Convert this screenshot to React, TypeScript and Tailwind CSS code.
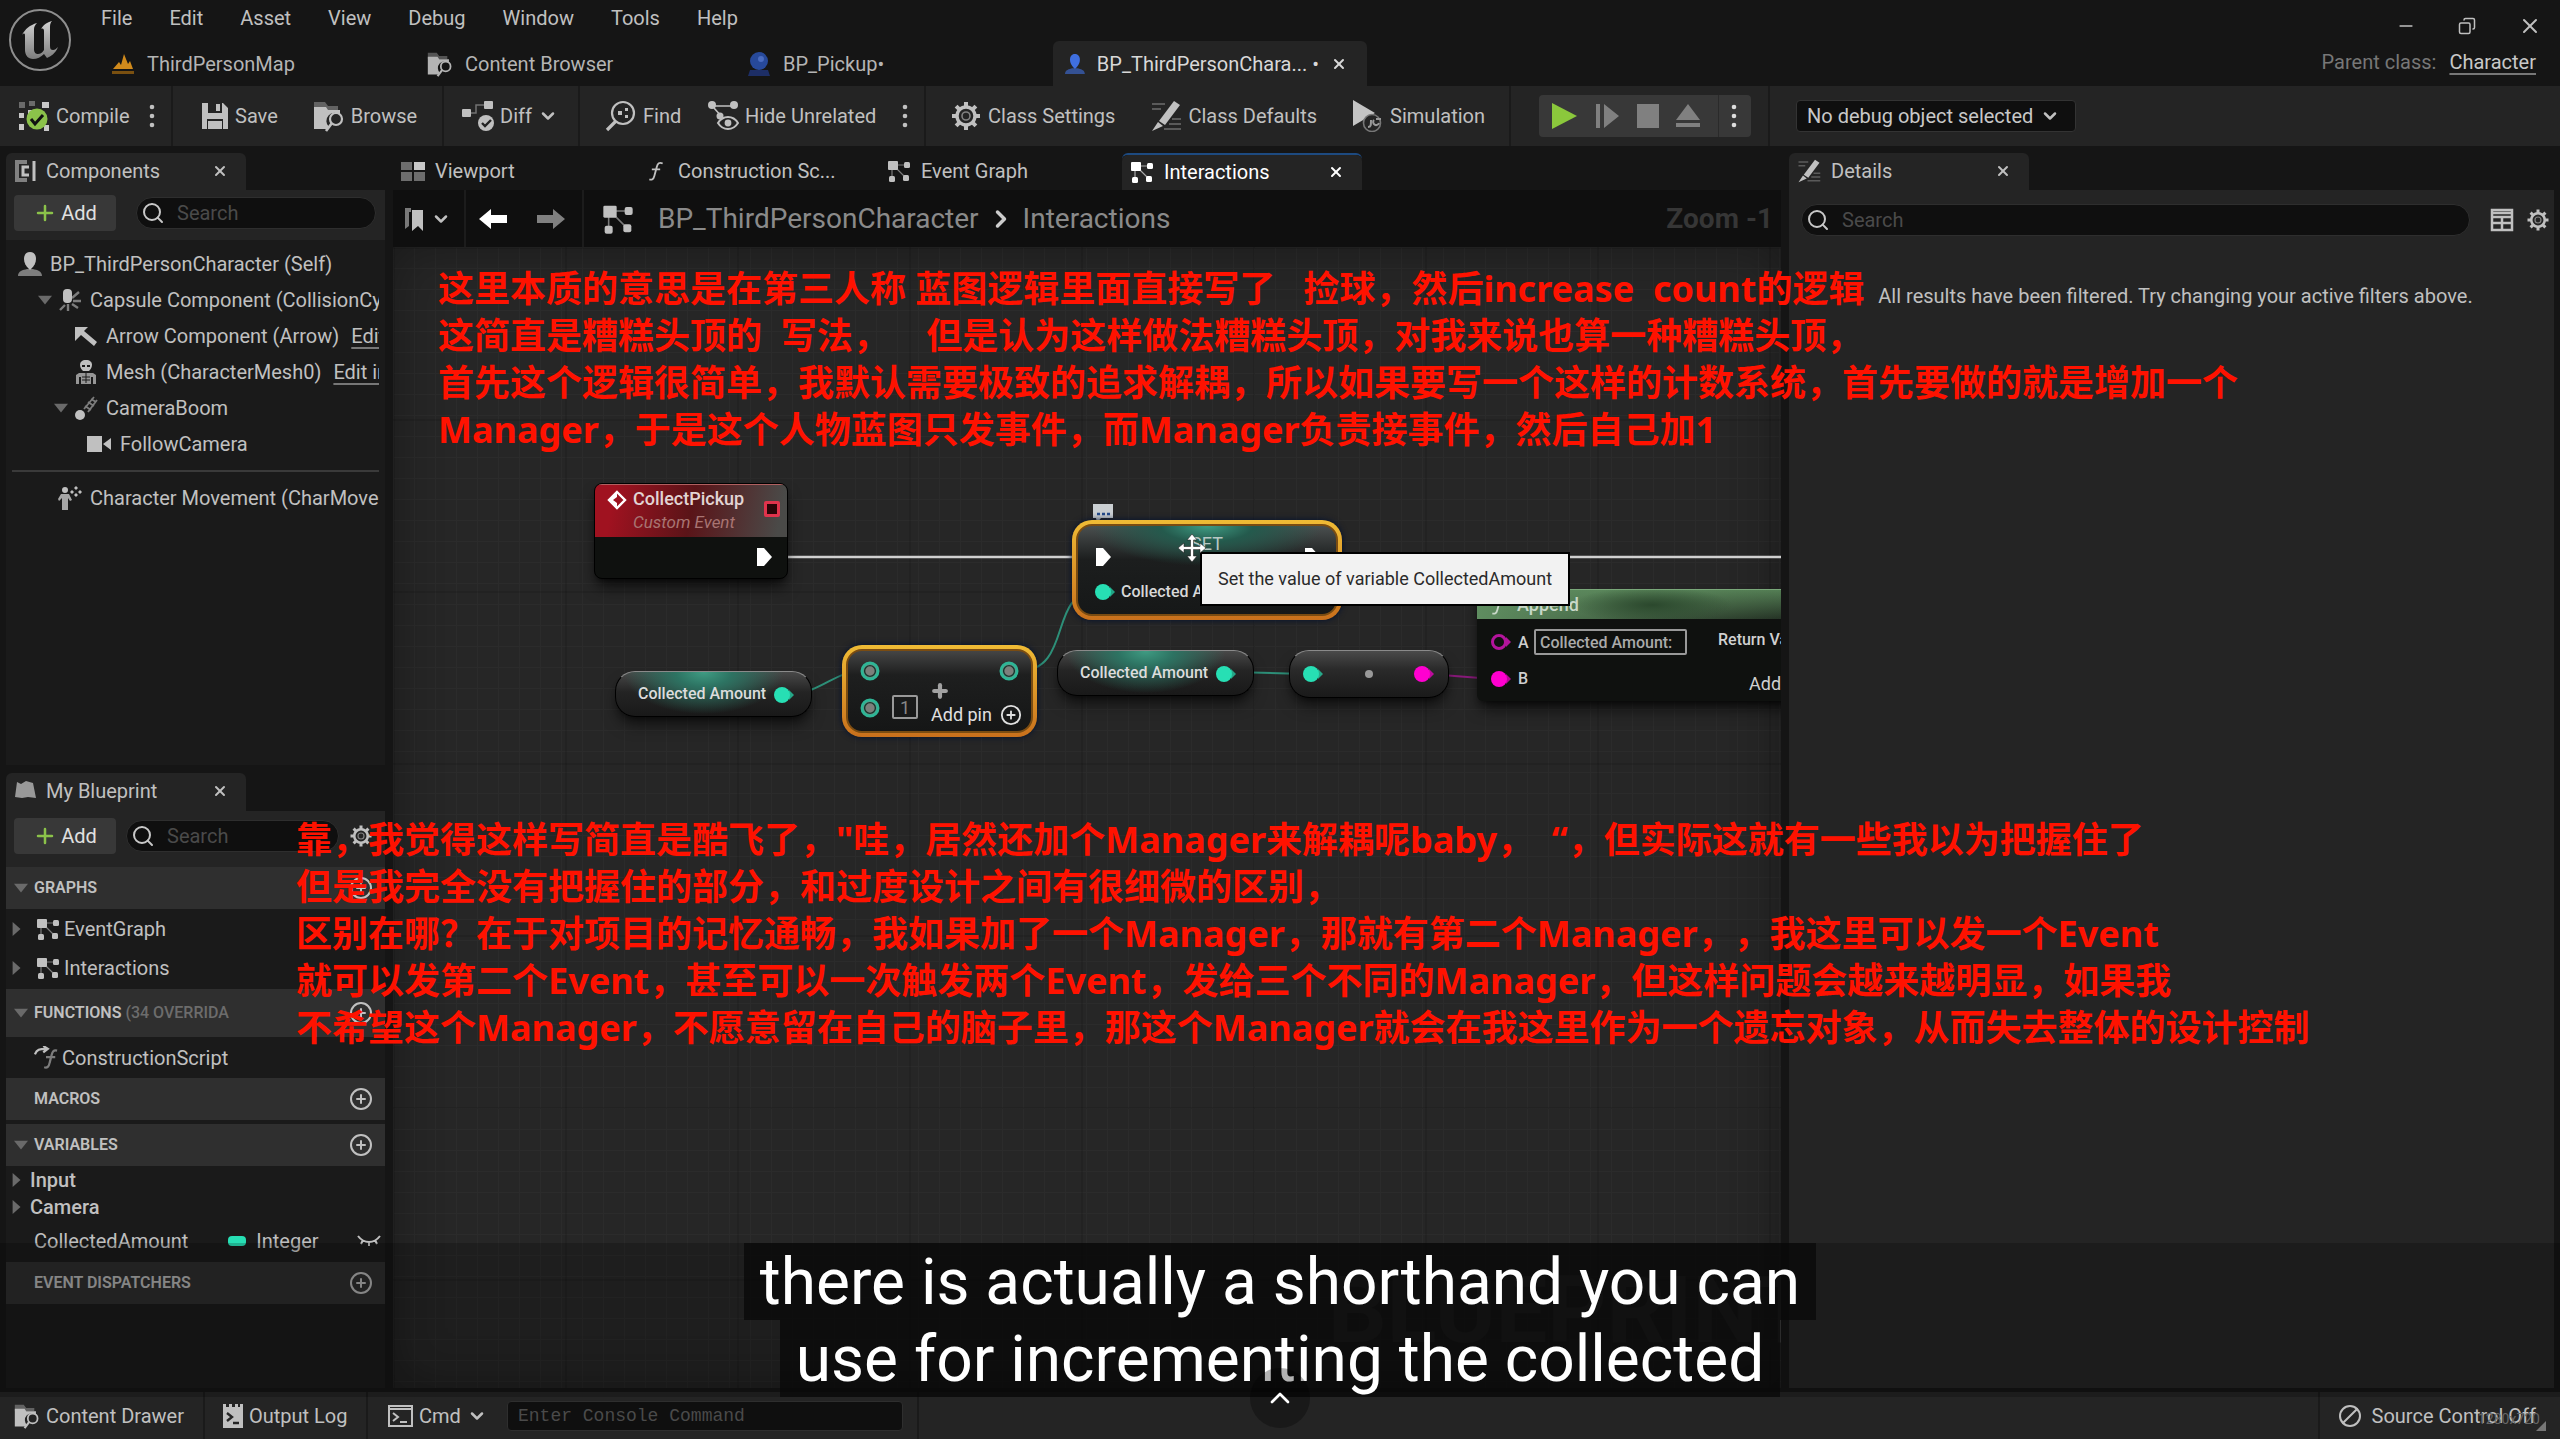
import type { ReactNode } from "react";
import { ChevronDown, ChevronUp, ChevronRight, Search, Plus, Copy, Minus, X, Ban, CirclePlus } from "lucide-react";

/* ---------- icons ---------- */

type IconProps = { className?: string };

const GraphIcon = ({ className = "size-6" }: IconProps) => (
  <svg viewBox="0 0 24 24" className={className} fill="currentColor" stroke="currentColor">
    <path d="M6 6h14M6 6l13 13M5 8v12" fill="none" strokeWidth="1.2" opacity=".6" />
    <rect x="1" y="2" width="10" height="9" rx="1" stroke="none" />
    <rect x="17" y="3" width="6" height="6" rx="1.5" stroke="none" />
    <rect x="2" y="17" width="6" height="6" rx="1.5" stroke="none" />
    <rect x="16" y="16" width="6" height="6" rx="1.5" stroke="none" />
  </svg>
);

const GearIcon = ({ className = "size-6" }: IconProps) => (
  <svg viewBox="0 0 32 32" className={className} fill="none" stroke="currentColor">
    {[0, 45, 90, 135].map((a) => (
      <path key={a} d="M16 2v5M16 25v5" strokeWidth="4" transform={`rotate(${a} 16 16)`} />
    ))}
    <circle cx="16" cy="16" r="9" strokeWidth="3.4" />
    <circle cx="16" cy="16" r="4" strokeWidth="1.6" opacity=".6" />
  </svg>
);

const FolderSearchIcon = ({ className = "size-7" }: IconProps) => (
  <svg viewBox="0 0 32 32" className={className} fill="currentColor">
    <path d="M1 2h11l3 4h10v4H1z" opacity=".4" />
    <path d="M1 7h12l2 3h12v5a8 8 0 0 0-11 12l-1 2H1z" />
    <circle cx="23" cy="19" r="6" fill="none" stroke="currentColor" strokeWidth="2.2" />
    <path d="M19 23l-6 8" stroke="currentColor" strokeWidth="2.6" />
  </svg>
);

const PencilIcon = ({ className = "size-7" }: IconProps) => (
  <svg viewBox="0 0 32 32" className={className} fill="currentColor">
    <path d="M2 4h13M2 9h9M22 19h9M19 24h12M14 29h17" stroke="currentColor" strokeWidth="2" opacity=".35" />
    <path d="M24 1l6 4-15 20-6-4zM8 22l5 4-11 5z" />
  </svg>
);

const PersonIcon = ({ className = "size-6" }: IconProps) => (
  <svg viewBox="0 0 24 24" className={className} fill="currentColor">
    <path d="M0 24c0-5 5-6 9-7h6c4 1 9 2 9 7z" opacity=".6" />
    <path d="M12 0c4 0 6 3 6 7s-2 7-4 9l-2 2-2-2c-2-2-4-5-4-9s2-7 6-7z" />
  </svg>
);

const CompileIcon = () => (
  <svg viewBox="0 0 32 32" className="size-8">
    <path d="M1 2h6v6H1zM11 1h6v5h-6z" fill="#6b6b6b" />
    <path d="M24 2h7v6h-7zM1 13h5v5H1zM1 24h5v6H1zM10 10h6v5h-6zM26 25h5v6h-5z" fill="#c8c8c8" />
    <circle cx="19" cy="19" r="10.5" fill="#8bc24a" />
    <path d="M13 19l4 5 8-9" fill="none" stroke="#111" strokeWidth="3" />
  </svg>
);

const SaveIcon = () => (
  <svg viewBox="0 0 28 28" className="size-7" fill="currentColor">
    <path d="M1 1h21l5 5v21H1zM7 1v10h14V1zM6 17v10h16V17z" fillRule="evenodd" />
    <path d="M15 2h4v7h-4zM7 19h14v8H7z" />
  </svg>
);

const DiffIcon = () => (
  <svg viewBox="0 0 32 32" className="size-8" fill="currentColor">
    <path d="M8 13h6V5h10" fill="none" stroke="currentColor" strokeWidth="1.5" opacity=".5" />
    <rect x="0" y="9" width="9" height="8" rx="1" />
    <rect x="22" y="1" width="9" height="8" rx="1" />
    <circle cx="24" cy="23" r="8" />
    <path d="M20 23l3 3 6-6" fill="none" stroke="#242424" strokeWidth="2.4" />
  </svg>
);

const FindIcon = () => (
  <svg viewBox="0 0 32 32" className="size-8" fill="none" stroke="currentColor">
    <circle cx="18" cy="13" r="11" strokeWidth="2.2" />
    <path d="M11 21L2 30" strokeWidth="3.2" />
    <path d="M13 11h4v4h-4zM20 8h3v3h-3zM20 15h3v3h-3z" fill="currentColor" stroke="none" />
  </svg>
);

const HideIcon = () => (
  <svg viewBox="0 0 32 32" className="size-8" fill="currentColor">
    <path d="M5 6h20M7 8l8 9" stroke="currentColor" strokeWidth="1.6" />
    <circle cx="5" cy="5" r="4" />
    <circle cx="27" cy="5" r="4" />
    <circle cx="13" cy="16" r="3.5" />
    <path d="M11 23c5-8 15-8 20 0-5 8-15 8-20 0z" fill="#242424" stroke="currentColor" strokeWidth="2" />
    <circle cx="21" cy="23" r="3.4" />
  </svg>
);

const SimulateIcon = () => (
  <svg viewBox="0 0 32 32" className="size-8">
    <path d="M1 0l22 13L1 26z" fill="#c4c4c4" />
    <circle cx="20" cy="23" r="8.5" fill="#242424" stroke="#777" strokeWidth="1.6" />
    <path d="M16 27c3 0 3-2 3-7M27 23a3 3 0 1 1-5-3" fill="none" stroke="#999" strokeWidth="2" />
    <path d="M24 19h5" stroke="#999" strokeWidth="2" />
  </svg>
);

const FuncIcon = ({ className = "size-6" }: IconProps) => (
  <svg viewBox="0 0 24 24" className={className} fill="none" stroke="currentColor" strokeWidth="2.2">
    <path d="M20 3c-4-2-6 0-7 4l-3 11c-1 4-3 5-6 4M7 10h10" />
  </svg>
);

const Dots = () => (
  <svg viewBox="0 0 6 24" className="h-6 w-1.5" fill="currentColor">
    <circle cx="3" cy="3" r="2.3" />
    <circle cx="3" cy="12" r="2.3" />
    <circle cx="3" cy="21" r="2.3" />
  </svg>
);

const Caret = ({ open = false }: { open?: boolean }) => (
  <svg viewBox="0 0 16 16" className="size-3.5 shrink-0 text-[#6a6a6a]" fill="currentColor">
    {open ? <path d="M0 3h16L8 13z" /> : <path d="M3 0v16l9-8z" />}
  </svg>
);

const UnrealLogo = () => (
  <svg viewBox="0 0 64 64" className="size-16">
    <defs>
      <linearGradient id="metal" x1="0" y1="0" x2="0" y2="1">
        <stop offset="0" stopColor="#d2d2d2" />
        <stop offset="1" stopColor="#7d7d7d" />
      </linearGradient>
    </defs>
    <circle cx="32" cy="32" r="30" fill="#161616" stroke="#8e8e8e" strokeWidth="2" />
    <path
      d="M14 27c3-6 8-10 15-12-2 2-3 4-3 6v20c0 4 2 5 4 5s4-1 6-4V23c0-2-1-3-3-2 3-5 7-7 11-8-2 2-2 4-2 7v18c0 3 1 4 3 4 2 0 3-1 5-3-3 7-7 9-11 11l-3-4c-3 3-7 5-11 5-5 0-8-4-8-9V28c0-3-1-3-3-1z"
      fill="url(#metal)"
    />
  </svg>
);

/* ---------- shared pieces ---------- */

const ToolButton = ({ icon, children }: { icon: ReactNode; children: ReactNode }) => (
  <button className="flex items-center gap-1.5 whitespace-nowrap">
    {icon}
    {children}
  </button>
);

const ToolGroup = ({ className, children }: { className: string; children: ReactNode }) => (
  <div className={`flex shrink-0 items-center border-r-2 border-[#1a1a1a] ${className}`}>{children}</div>
);

const PanelTab = ({ icon, label, active = false }: { icon: ReactNode; label: string; active?: boolean }) => (
  <div
    className={`flex h-full w-60 shrink-0 items-center gap-2.5 rounded-t-md pr-[18px] pb-0.5 pl-2 ${
      active ? "bg-[#242424]" : ""
    }`}
  >
    {icon}
    <span className="grow whitespace-nowrap">{label}</span>
    {active && (
      <button aria-label={`Close ${label}`}>
        <X className="size-4" strokeWidth={3} />
      </button>
    )}
  </div>
);

const SearchBox = ({ id, className }: { id: string; className: string }) => (
  <label
    htmlFor={id}
    className={`flex h-8 items-center gap-3 rounded-full border border-[#2e2e2e] bg-[#0f0f0f] px-1 ${className}`}
  >
    <Search className="size-6 shrink-0 text-[#c8c8c8]" />
    <input
      id={id}
      type="text"
      placeholder="Search"
      className="w-full min-w-0 bg-transparent text-xl leading-6 outline-none placeholder:text-[#4a4a4a]"
    />
  </label>
);

const AddButton = () => (
  <button className="flex h-9 w-[102px] shrink-0 items-center justify-center gap-1 rounded bg-[#383838] text-[#e0e0e0]">
    <Plus className="size-6 text-[#8bc24a]" strokeWidth={2.5} />
    Add
  </button>
);

/* ---------- components panel ---------- */

const CapsuleIcon = () => (
  <svg viewBox="0 0 24 24" className="size-6 shrink-0" fill="none" stroke="currentColor">
    <path d="M14 10l7-6M15 13h8M14 16l6 4M10 16v7M7 17l-5 5" strokeWidth="2.4" opacity=".6" />
    <rect x="5" y="1" width="9" height="14" rx="4" fill="currentColor" stroke="none" />
  </svg>
);
const ArrowIcon = () => (
  <svg viewBox="0 0 24 24" className="size-6 shrink-0" fill="currentColor">
    <path d="M1 3h13l-4 4 13 11-3 4L7 11l-6 6z" />
  </svg>
);
const SkeletonIcon = () => (
  <svg viewBox="0 0 24 24" className="size-6 shrink-0" fill="currentColor">
    <path d="M12 0c4 0 6 2 6 5s-2 5-3 6H9C8 10 6 8 6 5s2-5 6-5z" />
    <path d="M8 5h3v2H8zM13 5h3v2h-3z" fill="#1a1a1a" />
    <path d="M2 24v-9l3-2h14l3 2v9h-3v-7h-2v7H7v-7H5v7z" opacity=".75" />
    <path d="M12 13v10M8 17h8M8 20h8" stroke="#1a1a1a" />
  </svg>
);
const BoomIcon = () => (
  <svg viewBox="0 0 24 24" className="size-6 shrink-0" fill="currentColor">
    <circle cx="6" cy="19" r="5" />
    <path d="M10 13L20 1M14 16L23 4M11 10l6 4M14 6l6 4M17 3l5 3" stroke="currentColor" strokeWidth="1.8" opacity=".6" />
  </svg>
);
const CameraIcon = () => (
  <svg viewBox="0 0 26 24" className="h-6 w-[26px] shrink-0" fill="currentColor">
    <path d="M1 4h15v16H1zM17 12l8-6v12z" />
  </svg>
);
const MoveIcon = () => (
  <svg viewBox="0 0 24 24" className="size-6 shrink-0" fill="currentColor">
    <circle cx="7" cy="4" r="3" />
    <path d="M3 8h8l3 6-2 1-2-3v12H4V12l-3 3-1-2z" opacity=".85" />
    <path d="M18 0l2 2-2 2-2-2zM18 7l2 2-2 2-2-2zM14 4l2 2-2 2-2-2zM22 4l2 2-2 2-2-2z" />
  </svg>
);

const TreeRow = ({
  indent,
  icon,
  label,
  open = false,
  link,
}: {
  indent: string;
  icon: ReactNode;
  label: string;
  open?: boolean;
  link?: string;
}) => (
  <li className={`flex h-9 items-center gap-1.5 whitespace-nowrap ${indent}`}>
    <span className="w-3.5 shrink-0">{open && <Caret open />}</span>
    {icon}
    <span className="pl-0.5">{label}</span>
    {link && (
      <a href="#edit" className="ml-1.5 underline decoration-[#777] underline-offset-4">
        {link}
      </a>
    )}
  </li>
);

const ComponentsPanel = () => (
  <section className="flex h-[612px] shrink-0 flex-col">
    <div className="h-[37px]">
      <PanelTab
        active
        label="Components"
        icon={
          <svg viewBox="0 0 22 22" className="size-[22px]" fill="none" stroke="currentColor" strokeWidth="4">
            <path d="M13 2H3v18h10" opacity=".6" />
            <path d="M20 1v20M15 7H9v8h6" strokeWidth="3" />
          </svg>
        }
      />
    </div>
    <div className="flex h-[50px] shrink-0 items-center gap-5 bg-[#242424] px-2 pb-1">
      <AddButton />
      <SearchBox id="find-component" className="w-60" />
    </div>
    <div className="grow overflow-hidden bg-[#1a1a1a] pt-1.5 pr-1.5">
      <ul className="overflow-hidden">
        <TreeRow indent="-ml-2" icon={<PersonIcon className="size-6 shrink-0" />} label="BP_ThirdPersonCharacter (Self)" />
        <TreeRow indent="pl-8" open icon={<CapsuleIcon />} label="Capsule Component (CollisionCylinder)" />
        <TreeRow indent="pl-12" icon={<ArrowIcon />} label="Arrow Component (Arrow)" link="Edit in C++" />
        <TreeRow indent="pl-12" icon={<SkeletonIcon />} label="Mesh (CharacterMesh0)" link="Edit in C++" />
        <TreeRow indent="pl-12" open icon={<BoomIcon />} label="CameraBoom" />
        <TreeRow indent="pl-15" icon={<CameraIcon />} label="FollowCamera" />
      </ul>
      <hr className="my-2 ml-1.5 border-t-2 border-[#3a3a3a]" />
      <ul className="overflow-hidden">
        <TreeRow indent="pl-8" icon={<MoveIcon />} label="Character Movement (CharMoveComp)" />
      </ul>
    </div>
  </section>
);

/* ---------- my blueprint panel ---------- */

const Section = ({
  label,
  note,
  caret = false,
  height = "h-[42px]",
}: {
  label: string;
  note?: string;
  caret?: boolean;
  height?: string;
}) => (
  <div className={`flex shrink-0 items-center gap-1.5 bg-[#2f2f2f] pr-3 pl-2 text-base ${height}`}>
    <span className="w-3.5">{caret && <Caret open />}</span>
    <h3 className="grow font-semibold whitespace-nowrap">
      {label} {note && <span className="font-medium text-[#6c6c6c]">{note}</span>}
    </h3>
    <button aria-label={`Add to ${label}`}>
      <CirclePlus className="size-6" />
    </button>
  </div>
);

const BlueprintPanel = () => (
  <section className="flex min-h-0 grow flex-col bg-[#1a1a1a]">
    <div className="h-[38px] shrink-0 bg-[#151515]">
      <PanelTab
        active
        label="My Blueprint"
        icon={
          <svg viewBox="0 0 22 22" className="size-[22px]" fill="currentColor">
            <path d="M3 2l4 2 5-3 7 2 3 15-8-1-6 1-7-1z" opacity=".75" />
          </svg>
        }
      />
    </div>
    <div className="flex h-14 shrink-0 items-center gap-2.5 bg-[#242424] pr-3 pb-1.5 pl-2">
      <AddButton />
      <SearchBox id="find-member" className="w-[216px]" />
      <button aria-label="Panel settings" className="ml-auto">
        <GearIcon />
      </button>
    </div>
    <Section label="GRAPHS" caret />
    <ul>
      {["EventGraph", "Interactions"].map((name) => (
        <li key={name} className="flex h-[39px] items-center gap-1 pl-1">
          <Caret />
          <GraphIcon className="ml-2 size-6" />
          {name}
        </li>
      ))}
    </ul>
    <div className="h-0.5 shrink-0" />
    <Section label="FUNCTIONS" note="(34 OVERRIDA" caret height="h-12" />
    <div className="flex h-[41px] items-center gap-1 pl-7">
      <svg viewBox="0 0 26 26" className="size-6" fill="none" stroke="currentColor" strokeWidth="2.4">
        <path d="M1 9c2-5 5-6 12-6M10 0l5 3-5 4" />
        <path d="M25 5c-4-1-5 1-6 5l-2 8c-1 5-3 6-6 5M13 12h10" opacity=".6" />
      </svg>
      ConstructionScript
    </div>
    <Section label="MACROS" />
    <div className="h-1 shrink-0" />
    <Section label="VARIABLES" caret />
    <ul className="font-medium">
      {["Input", "Camera"].map((name) => (
        <li key={name} className="flex h-[27px] items-center gap-1.5 pl-1">
          <Caret />
          {name}
        </li>
      ))}
    </ul>
    <div className="flex h-[42px] items-center pr-1 pl-7">
      <span>CollectedAmount</span>
      <span className="ml-10 h-2.5 w-[18px] rounded bg-[#27dfb4]" />
      <span className="ml-2.5">Integer</span>
      <svg viewBox="0 0 24 12" className="ml-auto h-3 w-6" fill="none" stroke="currentColor" strokeWidth="2">
        <path d="M1 1c6 8 16 8 22 0M6 5l-2 4M12 7v4M18 5l2 4" />
      </svg>
    </div>
    <Section label="EVENT DISPATCHERS" height="h-[42px] opacity-85" />
  </section>
);

/* ---------- event graph ---------- */

const ExecPin = ({ className }: { className: string }) => (
  <svg viewBox="0 0 16 20" className={`absolute h-5 w-4 ${className}`} fill="#fff">
    <path d="M1 1h7l8 9-8 9H1z" />
  </svg>
);

const Pin = ({ className }: { className: string }) => (
  <svg viewBox="0 0 22 18" className={`absolute h-[18px] w-[22px] ${className}`} fill="currentColor">
    <circle cx="9" cy="9" r="8" />
    <path d="M16 4l5 5-5 5z" opacity=".7" />
  </svg>
);

const RingPin = ({ className }: { className: string }) => (
  <svg viewBox="0 0 20 20" className={`absolute size-5 ${className}`}>
    <circle cx="10" cy="10" r="8" fill="#7d7f7c" stroke="#2fb596" strokeWidth="3" />
    <circle cx="10" cy="10" r="5.4" fill="none" stroke="#17382f" strokeWidth="1.4" />
  </svg>
);

const VariableNode = ({ className }: { className: string }) => (
  <div
    className={`absolute flex h-[46px] w-[197px] items-center rounded-[20px] border border-black border-t-[#8a8a8a] bg-[radial-gradient(ellipse_80px_42px_at_45%_0%,#3f9c83_0%,#2d7362_35%,transparent_100%),linear-gradient(#484848,#242424_45%,#191919)] pl-[22px] text-base font-medium text-[#dcdcdc] shadow-lg shadow-black/60 ${className}`}
  >
    Collected Amount
    <Pin className="top-3.5 left-[157px] text-[#27dfb4]" />
  </div>
);

const Graph = () => (
  <div className="relative grow overflow-hidden bg-[#262626] bg-[repeating-linear-gradient(90deg,#0000001c_0_2px,transparent_2px_172px),repeating-linear-gradient(#0000001c_0_2px,transparent_2px_172px),repeating-linear-gradient(90deg,#2b2b2b_0_1px,transparent_1px_21px),repeating-linear-gradient(#2b2b2b_0_1px,transparent_1px_21px)] shadow-[inset_0_0_50px_#00000055]">
    <p className="absolute top-[1014px] left-[935px] text-[92px] leading-[100px] font-bold text-[#383838]">BLUEPRINT</p>

    <svg className="absolute inset-0 size-full" fill="none">
      <path d="M395 310H700M920 310H1400" stroke="#d0d0d0" strokeWidth="2.6" />
      <path d="M398 446C430 446 440 424 470 424" stroke="#2d8f78" strokeWidth="2" />
      <path d="M626 424C680 424 655 345 702 345" stroke="#2d8f78" strokeWidth="2" />
      <path d="M838 425L912 427" stroke="#2d8f78" strokeWidth="2" />
      <path d="M1036 427L1100 432" stroke="#8a1a7c" strokeWidth="2" />
    </svg>

    {/* CollectPickup */}
    <div className="absolute top-[236px] left-[201px] h-[96px] w-[194px] overflow-hidden rounded-lg border border-black bg-[#0f110f] shadow-lg shadow-black/70">
      <div className="h-[53px] border-t border-[#b06060] bg-[linear-gradient(100deg,#a01220_10%,#5a1418_50%,#4a4a48_95%)] pt-0.5 pl-[38px]">
        <h4 className="text-lg leading-6 font-medium text-[#e2d4d4]">CollectPickup</h4>
        <p className="text-[17px] leading-[22px] text-[#a87472] italic">Custom Event</p>
      </div>
      <svg viewBox="0 0 20 20" className="absolute top-1.5 left-3 size-5">
        <path d="M10 2l8 8-8 8-8-8z" fill="none" stroke="#fff" strokeWidth="2.4" />
        <path d="M10 2v5l-4 3 4 3v5l-8-8z" fill="#fff" />
      </svg>
      <span className="absolute top-[17px] right-[7px] size-4 rounded-xs border-[3px] border-[#e0334c] bg-[#2a0508]" />
      <ExecPin className="right-[15px] bottom-[11px]" />
    </div>

    {/* SET */}
    <svg viewBox="0 0 22 20" className="absolute top-[256px] left-[699px] h-5 w-[22px]">
      <path d="M1 1h20v14H9l-4 5-1-5H1z" fill="#c9ced1" />
      <path d="M5 11h3M10 11h3M15 11h3" stroke="#234a8a" strokeWidth="2.5" />
    </svg>
    <div className="absolute top-[273px] left-[679px] h-[100px] w-[270px] rounded-[20px] bg-linear-to-b from-[#efbb35] to-[#c8701c] p-1 shadow-[0_0_6px_#001030]">
      <div className="relative h-full rounded-2xl border-2 border-[#7a4c12] bg-[radial-gradient(ellipse_115px_40px_at_50%_0%,#3f9c83_0%,#245a4d_40%,transparent_100%),linear-gradient(#4a4f4f,#1c1e1e_38%,#161818)]">
        <h4 className="pt-1.5 text-center text-lg leading-6 text-[#b8c8c4]">SET</h4>
        <ExecPin className="top-[21px] left-[17px]" />
        <ExecPin className="top-[21px] right-4" />
        <Pin className="top-[57px] left-4 text-[#27dfb4]" />
        <span className="absolute top-[54px] left-[43px] text-base leading-6 font-medium whitespace-nowrap text-[#d8d8d8]">
          Collected Amount
        </span>
      </div>
    </div>

    {/* Add */}
    <div className="absolute top-[398px] left-[449px] h-[92px] w-[195px] rounded-[20px] bg-linear-to-b from-[#efbb35] to-[#c8701c] p-1 shadow-[0_0_6px_#001030]">
      <div className="relative h-full rounded-2xl border-2 border-[#7a4c12] bg-linear-to-b from-[#454545] via-[#1e1f1f] via-30% to-[#151616]">
        <RingPin className="top-2.5 left-3" />
        <RingPin className="top-2.5 right-3" />
        <RingPin className="top-[47px] left-3" />
        <input
          aria-label="Add value"
          defaultValue="1"
          className="absolute top-[44px] left-11 h-6 w-[26px] rounded-xs border-2 border-[#999] bg-transparent text-center text-lg leading-5 text-[#888]"
        />
        <Plus className="absolute top-[30px] left-[82px] size-5 text-[#a2a2a2]" strokeWidth={5} />
        <button className="absolute top-[52px] left-[83px] flex items-center gap-2 text-lg leading-6 whitespace-nowrap text-[#e0e0e0]">
          Add pin <CirclePlus className="size-[22px]" />
        </button>
      </div>
    </div>

    <VariableNode className="top-[424px] left-[222px]" />
    <VariableNode className="top-[403px] left-[664px]" />

    {/* Int to string */}
    <div className="absolute top-[403px] left-[896px] h-[48px] w-[160px] rounded-[20px] border border-black border-t-[#8a8a8a] bg-linear-to-b from-[#4a4a4a] via-[#2a2a2a] via-40% to-[#1a1a1a] shadow-lg shadow-black/60">
      <Pin className="top-3.5 left-3 text-[#27dfb4]" />
      <span className="absolute top-[19px] left-[75px] size-2 rounded-full bg-[#999]" />
      <Pin className="top-3.5 left-[123px] text-[#ff00d0]" />
    </div>

    {/* Append */}
    <div className="absolute top-[342px] left-[1084px] h-[112px] w-[420px] overflow-hidden rounded-md bg-[#0f110f] shadow-lg shadow-black/70">
      <div className="flex h-[30px] items-center gap-2 border-t border-[#7aa87a] bg-[radial-gradient(ellipse_80px_18px_at_175px_15px,#2b482d,transparent),linear-gradient(90deg,#5f8d60_0%,#54805500_100%),linear-gradient(#4f774f,#34523500)] pl-3 text-lg font-medium text-[#c8d8c8]">
        <FuncIcon className="size-5" />
        Append
      </div>
      <svg viewBox="0 0 22 18" className="absolute top-[44px] left-[13px] h-[18px] w-[22px]">
        <circle cx="9" cy="9" r="6.5" fill="none" stroke="#b3149c" strokeWidth="3" />
        <path d="M16 4l5 5-5 5z" fill="#b3149c" />
      </svg>
      <Pin className="top-[81px] left-[13px] text-[#ff00d0]" />
      <label htmlFor="append-a" className="absolute top-[42px] left-[41px] text-base leading-6 font-medium text-[#d0d0d0]">
        A
      </label>
      <input
        id="append-a"
        defaultValue="Collected Amount:"
        className="absolute top-10 left-[57px] h-[26px] w-[153px] rounded-xs border-2 border-[#999] bg-transparent px-1 text-base leading-5 font-medium text-[#aaa]"
      />
      <span className="absolute top-[78px] left-[41px] text-base leading-6 font-medium text-[#d0d0d0]">B</span>
      <span className="absolute top-[39px] left-[241px] text-base leading-6 font-medium whitespace-nowrap text-[#d0d0d0]">
        Return Value
      </span>
      <span className="absolute top-[83px] left-[272px] text-lg leading-6 whitespace-nowrap text-[#d0d0d0]">Add pin</span>
    </div>

    <div
      role="tooltip"
      className="absolute top-[305px] left-[807px] flex h-[54px] w-[370px] items-center justify-center border-2 border-black bg-[#f2f2f2] text-lg whitespace-nowrap text-[#2a2a2a]"
    >
      Set the value of variable CollectedAmount
    </div>
    <svg viewBox="0 0 28 28" className="absolute top-[287px] left-[785px] size-7" fill="#fff" stroke="#222" strokeWidth=".6">
      <path d="M14 0l5 6h-3.500v6.500H22V9l6 5-6 5v-3.500h-6.500V22H19l-5 6-5-6h3.500v-6.500H6V19l-6-5 6-5v3.500h6.500V6H9z" />
    </svg>
  </div>
);

const GraphPanel = () => (
  <main className="flex min-w-0 grow flex-col">
    <div className="flex h-[37px] shrink-0 gap-[3px]">
      <PanelTab
        label="Viewport"
        icon={
          <svg viewBox="0 0 24 22" className="h-[22px] w-6" fill="#6d6d6d">
            <path d="M0 2h11v8H0zM0 12h11v9H0zM13 12h11v9H13z" />
            <path d="M13 2h11v8H13z" fill="#c8c8c8" />
          </svg>
        }
      />
      <PanelTab label="Construction Sc..." icon={<FuncIcon className="mx-0.5 size-5" />} />
      <PanelTab label="Event Graph" icon={<GraphIcon />} />
      <div className="rounded-t-md border-t-2 border-[#1d4a80] text-white">
        <PanelTab active label="Interactions" icon={<GraphIcon />} />
      </div>
    </div>
    <div className="flex h-[57px] shrink-0 items-center bg-[#0f0f0f] pr-2 text-[28px]">
      <button aria-label="Bookmarks" className="flex h-full w-[73px] items-center gap-1.5 border-r-2 border-[#1c1c1c] pl-3">
        <svg viewBox="0 0 20 24" className="h-6 w-5" fill="currentColor">
          <path d="M0 1h6v4H4v14l-4 3z" opacity=".6" />
          <path d="M7 3h11v21l-5-5-6 5z" />
        </svg>
        <ChevronDown className="size-5" strokeWidth={3} />
      </button>
      <div className="flex h-full w-[118px] items-center gap-7 border-r-2 border-[#1c1c1c] pl-3">
        <button aria-label="Back">
          <svg viewBox="0 0 30 24" className="h-6 w-[30px]" fill="#fff">
            <path d="M1 12L13 2v6h16v8H13v6z" />
          </svg>
        </button>
        <button aria-label="Forward">
          <svg viewBox="0 0 30 24" className="h-6 w-[30px]" fill="#808080">
            <path d="M29 12L17 2v6H1v8h16v6z" />
          </svg>
        </button>
      </div>
      <GraphIcon className="mx-[18px] size-8" />
      <nav className="flex grow items-center gap-2 pl-1.5 text-[#8a8a8a]">
        <a href="#character">BP_ThirdPersonCharacter</a>
        <ChevronRight className="size-7 text-[#ccc]" strokeWidth={3} />
        <a href="#interactions">Interactions</a>
      </nav>
      <span className="font-bold text-[#363636]">Zoom -1</span>
    </div>
    <Graph />
  </main>
);

const DetailsPanel = () => (
  <aside className="flex w-[765px] shrink-0 flex-col">
    <div className="h-[37px] shrink-0">
      <PanelTab active label="Details" icon={<PencilIcon className="size-6" />} />
    </div>
    <div className="grow bg-[#242424] pt-3.5 pr-1 pl-3">
      <div className="flex items-center">
        <SearchBox id="find-detail" className="grow" />
        <button aria-label="Table view" className="ml-5">
          <svg viewBox="0 0 24 24" className="size-6" fill="none" stroke="currentColor" strokeWidth="2.5">
            <path d="M2 2h20v20H2zM2 5h20M2 9h20M2 15h20M12 9v13" />
          </svg>
        </button>
        <button aria-label="Details settings" className="ml-3">
          <GearIcon />
        </button>
      </div>
      <p className="mt-11 text-center leading-8">
        All results have been filtered. Try changing your active filters above.
      </p>
    </div>
  </aside>
);

/* ---------- page chrome ---------- */

const menus = ["File", "Edit", "Asset", "View", "Debug", "Window", "Tools", "Help"];

const Header = () => (
  <header className="flex h-[86px] shrink-0 pl-2">
    <div className="pt-2">
      <UnrealLogo />
    </div>
    <div className="flex grow flex-col justify-between pl-[27px]">
      <nav className="flex gap-[37px] pt-1 pl-0.5 leading-7">
        {menus.map((m) => (
          <button key={m}>{m}</button>
        ))}
      </nav>
      <div className="flex h-[45px] text-[#b4b4b4]">
        <div className="flex w-[318px] items-center gap-3 pl-3">
          <svg viewBox="0 0 24 20" className="h-5 w-6">
            <path d="M2 15L8 8l2 3 3-11 4 10 2-3 3 8z" fill="#d08a1c" />
            <path d="M1 17h22v3H1z" fill="#7a5010" />
          </svg>
          ThirdPersonMap
        </div>
        <div className="flex w-[318px] items-center gap-3 pl-2.5">
          <FolderSearchIcon className="size-[26px]" />
          Content Browser
        </div>
        <div className="flex w-[318px] items-center gap-3 pl-3">
          <svg viewBox="0 0 24 24" className="size-6">
            <circle cx="12" cy="9" r="9" fill="#27499a" />
            <circle cx="14" cy="7" r="3" fill="#4a6cc0" />
            <path d="M3 18h18l2 6H1z" fill="#1d2e66" />
          </svg>
          BP_Pickup•
        </div>
        <div className="flex w-[314px] items-center gap-3 rounded-t-md bg-[#242424] pr-5 pl-3 text-[#d8d8d8]">
          <PersonIcon className="size-6 text-[#3f6fe0]" />
          <span className="grow whitespace-nowrap">BP_ThirdPersonChara... •</span>
          <button aria-label="Close tab">
            <X className="size-4" strokeWidth={3} />
          </button>
        </div>
      </div>
    </div>
    <div className="flex flex-col items-end gap-3 pt-3.5">
      <div className="flex items-center gap-[42px] pr-[18px]">
        <button aria-label="Minimize">
          <Minus className="size-5" />
        </button>
        <button aria-label="Restore">
          <Copy className="size-[18px] -scale-x-100" />
        </button>
        <button aria-label="Close">
          <X className="size-6" />
        </button>
      </div>
      <p className="pr-6 leading-6 text-[#777]">
        Parent class:{" "}
        <a href="#parent" className="ml-2 text-[#c8c8c8] underline decoration-[#777] underline-offset-4">
          Character
        </a>
      </p>
    </div>
  </header>
);

const Toolbar = () => (
  <div className="flex h-[60px] shrink-0 bg-[#242424]">
    <ToolGroup className="w-[173px] justify-between pr-4 pl-[18px]">
      <ToolButton icon={<CompileIcon />}>Compile</ToolButton>
      <button aria-label="Compile options">
        <Dots />
      </button>
    </ToolGroup>
    <ToolGroup className="w-[271px] gap-[35px] pl-7">
      <ToolButton icon={<SaveIcon />}>Save</ToolButton>
      <ToolButton icon={<FolderSearchIcon className="size-8" />}>Browse</ToolButton>
    </ToolGroup>
    <ToolGroup className="w-[136px] pl-[18px]">
      <ToolButton icon={<DiffIcon />}>
        Diff <ChevronDown className="size-5" strokeWidth={3} />
      </ToolButton>
    </ToolGroup>
    <ToolGroup className="w-[346px] justify-between pr-4 pl-[25px]">
      <ToolButton icon={<FindIcon />}>Find</ToolButton>
      <ToolButton icon={<HideIcon />}>Hide Unrelated</ToolButton>
      <button aria-label="Hide options">
        <Dots />
      </button>
    </ToolGroup>
    <ToolGroup className="w-[585px] gap-[35px] pl-6">
      <ToolButton icon={<GearIcon className="size-8" />}>Class Settings</ToolButton>
      <ToolButton icon={<PencilIcon className="size-8" />}>Class Defaults</ToolButton>
      <ToolButton icon={<SimulateIcon />}>Simulation</ToolButton>
    </ToolGroup>
    <ToolGroup className="w-[259px] pl-7">
      <div className="flex h-[42px] w-[212px] items-center justify-between rounded bg-[#383838] pr-3.5 pl-3 text-[#808080]">
        <button aria-label="Play">
          <svg viewBox="0 0 26 26" className="size-[26px]" fill="#8bc83c">
            <path d="M1 0l25 13L1 26z" />
          </svg>
        </button>
        <button aria-label="Step">
          <svg viewBox="0 0 26 26" className="size-[26px]" fill="currentColor">
            <path d="M2 1h4v24H2zM10 1l15 12-15 12z" />
          </svg>
        </button>
        <button aria-label="Stop" className="h-6 w-[22px] bg-[#808080]" />
        <button aria-label="Eject">
          <svg viewBox="0 0 26 26" className="size-[26px]" fill="currentColor">
            <path d="M13 1l12 16H1zM1 20h24v4H1z" />
          </svg>
        </button>
        <button aria-label="Play options" className="flex h-[42px] items-center border-l border-[#2a2a2a] pl-3 text-[#ddd]">
          <Dots />
        </button>
      </div>
    </ToolGroup>
    <div className="flex items-center pl-[26px]">
      <div className="relative">
        <select
          aria-label="Debug object"
          className="h-8 w-[280px] appearance-none rounded border border-[#333] bg-[#0f0f0f] pl-2.5 text-xl leading-6 text-[#c8c8c8]"
        >
          <option>No debug object selected</option>
        </select>
        <ChevronDown className="pointer-events-none absolute top-1.5 right-4 size-5" strokeWidth={3} />
      </div>
    </div>
  </div>
);

const StatusBar = () => (
  <footer className="flex h-[47px] shrink-0 bg-[#242424]">
    <ToolGroup className="w-[205px] pl-3.5">
      <ToolButton icon={<FolderSearchIcon className="size-[26px]" />}>Content Drawer</ToolButton>
    </ToolGroup>
    <ToolGroup className="w-[163px] pl-[18px]">
      <ToolButton
        icon={
          <svg viewBox="0 0 20 24" className="h-6 w-5" fill="currentColor">
            <path d="M0 0h3v3h3V0h3v3h3V0h3v3h2V0h3v24H0z" />
            <path d="M4 9l5 4-5 4M10 19h6" fill="none" stroke="#242424" strokeWidth="2.4" />
          </svg>
        }
      >
        Output Log
      </ToolButton>
    </ToolGroup>
    <ToolGroup className="w-[551px] justify-between pr-3.5 pl-5">
      <ToolButton
        icon={
          <svg viewBox="0 0 25 22" className="h-[22px] w-[25px]" fill="none" stroke="currentColor" strokeWidth="2">
            <path d="M1 1h23v20H1zM1 4h23" />
            <path d="M5 8l5 4-5 4M12 17h7" />
          </svg>
        }
      >
        Cmd <ChevronDown className="size-5" strokeWidth={3} />
      </ToolButton>
      <input
        type="text"
        aria-label="Console command"
        placeholder="Enter Console Command"
        className="h-[30px] w-[396px] rounded-sm border border-[#2e2e2e] bg-[#0f0f0f] px-2.5 font-['Liberation_Mono',monospace] text-lg leading-6 outline-none placeholder:text-[#4a4a4a]"
      />
    </ToolGroup>
    <div className="ml-auto flex items-center gap-2.5 border-l-2 border-[#1a1a1a] pr-6 pl-[18px]">
      <Ban className="size-6 -scale-x-100" />
      Source Control Off
    </div>
  </footer>
);

const topNotes = [
  "这里本质的意思是在第三人称 蓝图逻辑里面直接写了   捡球，然后increase  count的逻辑",
  "这简直是糟糕头顶的  写法，    但是认为这样做法糟糕头顶，对我来说也算一种糟糕头顶，",
  "首先这个逻辑很简单，我默认需要极致的追求解耦，所以如果要写一个这样的计数系统，首先要做的就是增加一个",
  "Manager，于是这个人物蓝图只发事件，而Manager负责接事件，然后自己加1",
];

const bottomNotes = [
  '靠，我觉得这样写简直是酷飞了，"哇，居然还加个Manager来解耦呢baby，  “，但实际这就有一些我以为把握住了',
  "但是我完全没有把握住的部分，和过度设计之间有很细微的区别，",
  "区别在哪？在于对项目的记忆通畅，我如果加了一个Manager，那就有第二个Manager，，我这里可以发一个Event",
  "就可以发第二个Event，甚至可以一次触发两个Event，发给三个不同的Manager，但这样问题会越来越明显，如果我",
  "不希望这个Manager，不愿意留在自己的脑子里，那这个Manager就会在我这里作为一个遗忘对象，从而失去整体的设计控制",
];

const Notes = ({ lines, className }: { lines: string[]; className: string }) => (
  <div
    className={`absolute font-['Noto_Sans','Noto_Sans_CJK_SC',sans-serif] text-4xl leading-[47px] font-bold whitespace-pre text-[#ff1200] [text-spacing-trim:space-all] ${className}`}
  >
    {lines.map((line) => (
      <p key={line}>{line}</p>
    ))}
  </div>
);

export default function App() {
  return (
    <div className="relative flex h-screen flex-col overflow-hidden bg-[#151515] font-['Roboto',sans-serif] text-xl leading-6 text-[#c0c0c0]">
      <Header />
      <Toolbar />
      <div className="flex min-h-0 grow gap-2 px-1.5 pt-[7px] pb-1">
        <div className="flex w-[379px] shrink-0 flex-col gap-2">
          <ComponentsPanel />
          <BlueprintPanel />
        </div>
        <GraphPanel />
        <DetailsPanel />
      </div>
      <StatusBar />

      <Notes lines={topNotes} className="top-[265px] left-[438px]" />
      <Notes lines={bottomNotes} className="top-[816px] left-[296px]" />

      {/* Player overlay: shade, captions, drawer handle */}
      <div className="pointer-events-none absolute inset-x-0 bottom-[42px] flex flex-col items-center bg-black/20 text-[64px] leading-[74px] text-white">
        <p className="bg-[#080808]/75 px-4 pt-[3px] whitespace-nowrap">there is actually a shorthand you can</p>
        <p className="bg-[#080808]/75 px-4 pt-[3px] whitespace-nowrap">use for incrementing the collected</p>
      </div>
      <button
        aria-label="Show controls"
        className="absolute bottom-[11px] left-1/2 flex size-[60px] -translate-x-1/2 items-center justify-center rounded-full bg-black/30 text-white"
      >
        <ChevronUp className="size-8" />
      </button>
      <span className="absolute right-5 bottom-2.5 text-sm text-[#666]">1280x720</span>
      <svg viewBox="0 0 10 10" className="absolute right-3.5 bottom-2 size-2.5" fill="#777">
        <path d="M10 0v10H0z" />
      </svg>
    </div>
  );
}
